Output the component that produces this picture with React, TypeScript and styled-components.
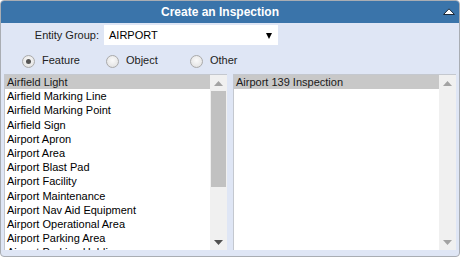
import React from 'react';
import styled, { createGlobalStyle } from 'styled-components';

const GlobalStyle = createGlobalStyle`
  html, body {
    margin: 0;
    padding: 0;
    background: #ffffff;
  }
  body {
    font-family: "Liberation Sans", Arial, sans-serif;
  }
`;

const features = [
  'Airfield Light',
  'Airfield Marking Line',
  'Airfield Marking Point',
  'Airfield Sign',
  'Airport Apron',
  'Airport Area',
  'Airport Blast Pad',
  'Airport Facility',
  'Airport Maintenance',
  'Airport Nav Aid Equipment',
  'Airport Operational Area',
  'Airport Parking Area',
  'Airport Parking Holding',
  'Airport Runway',
];

const inspections = ['Airport 139 Inspection'];

const App = () => {
  return (
    <>
      <GlobalStyle />
      <Panel>
        <Header>
          <Title>Create an Inspection</Title>
          <Collapse>
            <svg width="12" height="7" viewBox="0 0 12 7">
              <polygon points="0.5,6.5 6,0.8 11.5,6.5" fill="#ffffff" stroke="#1d2b3a" strokeWidth="1" />
            </svg>
          </Collapse>
        </Header>
        <Body>
          <FieldRow>
            <Label>Entity Group:</Label>
            <Select>
              <span>AIRPORT</span>
              <Caret />
            </Select>
          </FieldRow>
          <RadioRow>
            <RadioOption>
              <Radio $checked />
              <span>Feature</span>
            </RadioOption>
            <RadioOption>
              <Radio />
              <span>Object</span>
            </RadioOption>
            <RadioOption>
              <Radio />
              <span>Other</span>
            </RadioOption>
          </RadioRow>
          <Lists>
            <ListBox items={features} thumb />
            <ListBox items={inspections} />
          </Lists>
        </Body>
      </Panel>
    </>
  );
};

export default App;

const ListBox = (props: { items: string[]; thumb?: boolean }) => {
  const { items, thumb } = props;
  return (
    <List>
      <Options>
        {items.map((item, i) => (
          <Option key={item} $selected={i === 0}>
            {item}
          </Option>
        ))}
      </Options>
      <Scrollbar>
        <ArrowButton>
          <svg width="9" height="5" viewBox="0 0 9 5">
            <polygon points="0,5 4.5,0 9,5" fill="#a3a3a3" />
          </svg>
        </ArrowButton>
        <Track>{thumb && <Thumb />}</Track>
        <ArrowButton>
          <svg width="9" height="5" viewBox="0 0 9 5">
            <polygon points="0,0 4.5,5 9,0" fill={thumb ? '#505050' : '#a3a3a3'} />
          </svg>
        </ArrowButton>
      </Scrollbar>
    </List>
  );
};

const Panel = styled.div`
  width: 460px;
  height: 257px;
  box-sizing: border-box;
  border: 1px solid #a9adb3;
  border-radius: 4px;
  background: #dfe6f5;
  overflow: hidden;
  display: flex;
  flex-direction: column;
`;

const Header = styled.div`
  height: 22px;
  background: #3a74aa;
  display: flex;
  align-items: center;
  flex-shrink: 0;
`;

const Title = styled.div`
  flex: 1;
  padding-left: 20px;
  text-align: center;
  color: #ffffff;
  font-weight: bold;
  font-size: 12px;
  margin-top: -1px;
`;

const Collapse = styled.div`
  width: 40px;
  display: flex;
  justify-content: flex-end;
  padding-right: 4px;
  box-sizing: border-box;
  margin-top: -2px;
`;

const Body = styled.div`
  flex: 1;
  display: flex;
  flex-direction: column;
  padding: 2px 3px 6px 3px;
  min-height: 0;
`;

const FieldRow = styled.div`
  display: flex;
  align-items: center;
  height: 20px;
  gap: 5px;
`;

const Label = styled.label`
  width: 95px;
  text-align: right;
  font-size: 11px;
  color: #222;
`;

const Select = styled.div`
  width: 174px;
  height: 20px;
  box-sizing: border-box;
  background: #ffffff;
  display: flex;
  align-items: center;
  justify-content: space-between;
  padding: 0 6px 0 5px;
  font-size: 11px;
  color: #000;
`;

const Caret = styled.span`
  width: 0;
  height: 0;
  border-left: 3.5px solid transparent;
  border-right: 3.5px solid transparent;
  border-top: 6px solid #000;
  margin-top: 1px;
`;

const RadioRow = styled.div`
  display: flex;
  align-items: center;
  height: 28px;
  padding-left: 18px;
  margin-top: 1px;
`;

const RadioOption = styled.label`
  width: 84px;
  display: flex;
  align-items: center;
  gap: 7px;
  font-size: 11px;
  color: #222;
`;

const Radio = styled.span<{ $checked?: boolean }>`
  width: 13px;
  height: 13px;
  box-sizing: border-box;
  border-radius: 50%;
  border: 1px solid #aaaaaa;
  background: radial-gradient(circle at 50% 40%, #fafafa 0%, #e6e6e6 70%, #d3d3d3 100%);
  display: flex;
  align-items: center;
  justify-content: center;
  margin-top: 3px;
  &::after {
    content: '';
    width: 5px;
    height: 5px;
    border-radius: 50%;
    background: ${(p) => (p.$checked ? '#555' : 'transparent')};
  }
`;

const Lists = styled.div`
  flex: 1;
  display: grid;
  grid-template-columns: 223px 223px;
  gap: 6px;
  min-height: 0;
`;

const List = styled.div`
  display: flex;
  border-top: 1px solid #c4c8cf;
  border-left: 1px solid #c4c8cf;
  background: #ffffff;
  min-height: 0;
  overflow: hidden;
`;

const Options = styled.div`
  flex: 1;
  overflow: hidden;
`;

const Option = styled.div<{ $selected?: boolean }>`
  font-size: 11px;
  line-height: 14.2px;
  padding-left: 2px;
  white-space: nowrap;
  background: ${(p) => (p.$selected ? '#c8c8c8' : 'transparent')};
  color: ${(p) => (p.$selected ? '#1a1a1a' : '#000')};
`;

const Scrollbar = styled.div`
  width: 17px;
  flex-shrink: 0;
  background: #f0f0f0;
  display: flex;
  flex-direction: column;
`;

const ArrowButton = styled.div`
  height: 16px;
  display: flex;
  align-items: center;
  justify-content: center;
  flex-shrink: 0;
`;

const Track = styled.div`
  flex: 1;
  display: flex;
  flex-direction: column;
  padding: 0 1px;
`;

const Thumb = styled.div`
  height: 96px;
  background: #c1c1c1;
`;
